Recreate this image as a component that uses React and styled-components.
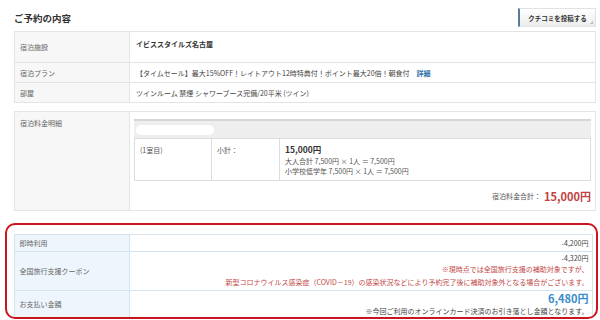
import React from 'react';
import styled, { createGlobalStyle } from 'styled-components';

const GlobalStyle = createGlobalStyle`
    html, body {
        margin: 0;
        padding: 0;
        background: #ffffff;
    }
    body {
        font-family: "Noto Sans CJK JP", "Noto Sans", sans-serif;
        color: #444;
        font-size: 7px;
        line-height: 10px;
    }
`;

const Page = styled.div`
    width: 600px;
    height: 320px;
    box-sizing: border-box;
    padding: 0 4px 0 14px;
    overflow: hidden;
`;

const Header = styled.div`
    height: 31px;
    box-sizing: border-box;
    padding-top: 4px;
    display: flex;
    align-items: center;
    justify-content: space-between;
`;

const Title = styled.h2`
    margin: 0;
    font-size: 9.5px;
    line-height: 12px;
    font-weight: bold;
    color: #333;
`;

const ReviewButton = styled.button`
    position: relative;
    width: 78px;
    height: 19px;
    border: 1px solid #e2e2e2;
    border-left: 2px solid #5b7a99;
    background: linear-gradient(#ffffff, #ececec);
    font-family: inherit;
    font-size: 6.5px;
    line-height: 10px;
    font-weight: bold;
    color: #333;
    padding: 0;

    &::after {
        content: '';
        position: absolute;
        right: 2px;
        bottom: 2px;
        border-style: solid;
        border-width: 0 0 3px 3px;
        border-color: transparent transparent #b8b8b8 transparent;
    }
`;

const Table = styled.div`
    border: 1px solid ${(p) => p.$line};
    border-bottom: none;
    margin-top: ${(p) => p.$gap || 0}px;
`;

const Row = styled.div`
    display: grid;
    grid-template-columns: 115px 1fr;
    height: ${(p) => p.$h}px;
    box-sizing: border-box;
    border-bottom: 1px solid ${(p) => p.$line};
    overflow: hidden;
`;

const Label = styled.div`
    background: ${(p) => p.$bg};
    border-right: 1px solid ${(p) => p.$line};
    padding: ${(p) => (p.$top ? '6px 5px 0' : '0 5px')};
    display: flex;
    align-items: ${(p) => (p.$top ? 'flex-start' : 'center')};
    color: #666;
`;

const Value = styled.div`
    padding: 0 6px;
    display: flex;
    flex-direction: column;
    justify-content: ${(p) => (p.$top ? 'flex-start' : 'center')};
    align-items: ${(p) => (p.$right ? 'flex-end' : 'flex-start')};
    text-align: ${(p) => (p.$right ? 'right' : 'left')};
    padding-top: ${(p) => (p.$top ? 7 : 0)}px;
    padding-right: ${(p) => (p.$right ? 3 : 6)}px;
`;

const HotelName = styled.span`
    font-weight: bold;
    color: #333;
`;

const Detail = styled.a`
    margin-left: 7px;
    color: #2f6fa8;
    font-weight: bold;
    text-decoration: none;
`;

const BreakdownCell = styled.div`
    padding: 7px 4px 0;
`;

const GrayBand = styled.div`
    height: 17px;
    border-top: 2px solid #d6d6d6;
    background: #eeeeee;
    display: flex;
    align-items: center;
    padding-left: 2px;
`;

const Blur = styled.div`
    width: 78px;
    height: 10px;
    border-radius: 5px;
    background: #ffffff;
    filter: blur(0.6px);
`;

const InnerTable = styled.div`
    display: grid;
    grid-template-columns: 76px 68px 1fr;
    height: 43px;
    box-sizing: border-box;
    border: 1px solid #dddddd;
`;

const InnerCell = styled.div`
    padding: ${(p) => (p.$price ? '4px 5px 0' : '6px 5px 0')};
    border-left: ${(p) => (p.$first ? 'none' : '1px solid #dddddd')};
    color: #555;
`;

const SubPrice = styled.div`
    font-size: 8.5px;
    font-weight: bold;
    color: #333;
    line-height: 12px;
    margin-bottom: 1px;
`;

const SmallLine = styled.div`
    line-height: 10px;
    color: #555;
`;

const TotalLine = styled.div`
    height: 28px;
    display: flex;
    justify-content: flex-end;
    align-items: center;
    padding-top: 2px;
    box-sizing: border-box;
    gap: 3px;
    color: #555;
    line-height: 14px;
`;

const TotalPrice = styled.span`
    font-size: 11px;
    line-height: 14px;
    font-weight: bold;
    color: #c0413f;
`;

const Highlight = styled.div`
    margin: 12px -2px 0 -9px;
    height: 96px;
    box-sizing: border-box;
    border: 2.5px solid #c8151f;
    border-radius: 10px;
    padding: 8.5px 3.5px 0 6.5px;
    overflow: hidden;
`;

const Note = styled.div`
    color: #c24848;
    line-height: 13px;
`;

const PayTotal = styled.div`
    font-size: 11px;
    font-weight: bold;
    color: #3a8ccc;
    line-height: 14px;
`;

const PayNote = styled.div`
    color: #444;
    line-height: 12px;
`;

const GRAY = '#e4e4e4';
const BLUE = '#d3e3ef';

const App = () => {
    return (
        <Page>
            <GlobalStyle />
            <Header>
                <Title>ご予約の内容</Title>
                <ReviewButton>クチコミを投稿する</ReviewButton>
            </Header>

            <Table $line={GRAY}>
                <Row $h={31} $line={GRAY}>
                    <Label $bg="#f7f7f7" $line={GRAY}>宿泊施設</Label>
                    <Value $top>
                        <HotelName>イビススタイルズ名古屋</HotelName>
                    </Value>
                </Row>
                <Row $h={20} $line={GRAY}>
                    <Label $bg="#f7f7f7" $line={GRAY}>宿泊プラン</Label>
                    <Value>
                        <div>
                            【タイムセール】最大15%OFF！レイトアウト12時特典付！ポイント最大20倍！朝食付
                            <Detail>詳細</Detail>
                        </div>
                    </Value>
                </Row>
                <Row $h={20} $line={GRAY}>
                    <Label $bg="#f7f7f7" $line={GRAY}>部屋</Label>
                    <Value>ツインルーム 禁煙 シャワーブース完備/20平米 (ツイン)</Value>
                </Row>
            </Table>

            <Table $line={GRAY} $gap={8}>
                <Row $h={99} $line={GRAY}>
                    <Label $bg="#f7f7f7" $line={GRAY} $top>宿泊料金明細</Label>
                    <BreakdownCell>
                        <GrayBand>
                            <Blur />
                        </GrayBand>
                        <InnerTable>
                            <InnerCell $first>(1室目)</InnerCell>
                            <InnerCell>小計：</InnerCell>
                            <InnerCell $price>
                                <SubPrice>15,000円</SubPrice>
                                <SmallLine>大人合計 7,500円 × 1人 ＝ 7,500円</SmallLine>
                                <SmallLine>小学校低学年 7,500円 × 1人 ＝ 7,500円</SmallLine>
                            </InnerCell>
                        </InnerTable>
                        <TotalLine>
                            <span>宿泊料金合計：</span>
                            <TotalPrice>15,000円</TotalPrice>
                        </TotalLine>
                    </BreakdownCell>
                </Row>
            </Table>

            <Highlight>
                <Table $line={BLUE}>
                    <Row $h={17} $line={BLUE}>
                        <Label $bg="#eef5fc" $line={BLUE}>即時利用</Label>
                        <Value $right>-4,200円</Value>
                    </Row>
                    <Row $h={39} $line={BLUE}>
                        <Label $bg="#eef5fc" $line={BLUE}>全国旅行支援クーポン</Label>
                        <Value $right>
                            <div>-4,320円</div>
                            <Note>※現時点では全国旅行支援の補助対象ですが、</Note>
                            <Note>
                                新型コロナウイルス感染症（COVID－19）の感染状況などにより予約完了後に補助対象外となる場合がございます。
                            </Note>
                        </Value>
                    </Row>
                    <Row $h={27} $line={BLUE}>
                        <Label $bg="#eef5fc" $line={BLUE}>お支払い金額</Label>
                        <Value $right>
                            <PayTotal>6,480円</PayTotal>
                            <PayNote>※今回ご利用のオンラインカード決済のお引き落とし金額となります。</PayNote>
                        </Value>
                    </Row>
                </Table>
            </Highlight>
        </Page>
    );
};

export default App;
